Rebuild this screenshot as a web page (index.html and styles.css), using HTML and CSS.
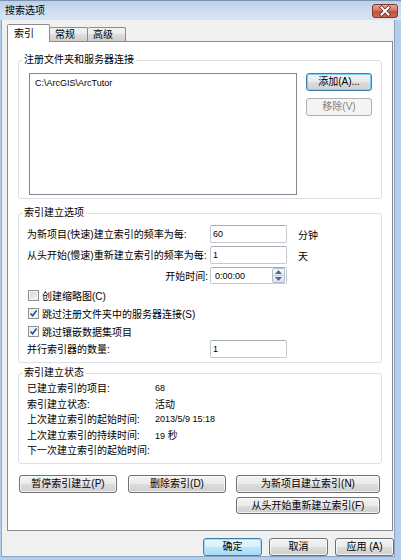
FILE: index.html
```html
<!DOCTYPE html>
<html lang="zh-CN">
<head>
<meta charset="utf-8">
<title>搜索选项</title>
<link rel="stylesheet" href="styles.css">
</head>
<body>
<div class="window">
  <div class="titlebar">
    <span class="title">搜索选项</span>
    <div class="close">
      <svg width="26" height="14" viewBox="0 0 26 14">
        <defs>
          <linearGradient id="cg" x1="0" y1="0" x2="0" y2="1">
            <stop offset="0" stop-color="#e9a99b"/>
            <stop offset="0.45" stop-color="#d47a66"/>
            <stop offset="0.5" stop-color="#c4503a"/>
            <stop offset="1" stop-color="#cf6a4f"/>
          </linearGradient>
        </defs>
        <rect x="0.5" y="0.5" width="25" height="13" rx="2.5" fill="url(#cg)" stroke="#7d3a2e"/>
        <path d="M9.5 3.5 L16.5 10.5 M16.5 3.5 L9.5 10.5" stroke="#6b2a20" stroke-width="3.6" stroke-linecap="square"/>
        <path d="M9.5 3.5 L16.5 10.5 M16.5 3.5 L9.5 10.5" stroke="#ffffff" stroke-width="2" stroke-linecap="square"/>
      </svg>
    </div>
  </div>
  <div class="client">
    <div class="tabs">
      <div class="tab active">索引</div>
      <div class="tab">常规</div>
      <div class="tab">高级</div>
    </div>
    <div class="page">
      <div class="group g1">
        <span class="legend">注册文件夹和服务器连接</span>
        <div class="listbox"><div class="item lat">C:\ArcGIS\ArcTutor</div></div>
        <div class="sidebtns">
          <div class="btn focus">添加(A)...</div>
          <div class="btn disabled">移除(V)</div>
        </div>
      </div>

      <div class="group g2">
        <span class="legend">索引建立选项</span>
        <div class="frow">
          <span class="flabel">为新项目(快速)建立索引的频率为每:</span>
          <div class="tbox lat">60</div>
          <span class="unit">分钟</span>
        </div>
        <div class="frow">
          <span class="flabel">从头开始(慢速)重新建立索引的频率为每:</span>
          <div class="tbox lat">1</div>
          <span class="unit">天</span>
        </div>
        <div class="frow spinrow">
          <span class="flabel right">开始时间:</span>
          <div class="tbox spin">
            <span class="lat spintext">0:00:00</span>
            <div class="spinner">
              <div class="sbtn"><svg width="7" height="4" viewBox="0 0 7 4"><path d="M0 4 L3.5 0 L7 4 Z" fill="#4a6a95"/></svg></div>
              <div class="sbtn"><svg width="7" height="4" viewBox="0 0 7 4"><path d="M0 0 L3.5 4 L7 0 Z" fill="#4a6a95"/></svg></div>
            </div>
          </div>
        </div>
        <div class="crow first">
          <span class="cbox"></span>
          <span>创建缩略图(C)</span>
        </div>
        <div class="crow">
          <span class="cbox checked"><svg width="9" height="9" viewBox="0 0 9 9"><path d="M1.5 4.5 L3.6 6.8 L7.6 1.6" fill="none" stroke="#2b4b83" stroke-width="1.6"/></svg></span>
          <span>跳过注册文件夹中的服务器连接(S)</span>
        </div>
        <div class="crow">
          <span class="cbox checked"><svg width="9" height="9" viewBox="0 0 9 9"><path d="M1.5 4.5 L3.6 6.8 L7.6 1.6" fill="none" stroke="#2b4b83" stroke-width="1.6"/></svg></span>
          <span>跳过镶嵌数据集项目</span>
        </div>
        <div class="frow">
          <span class="flabel">并行索引器的数量:</span>
          <div class="tbox lat">1</div>
        </div>
      </div>

      <div class="group g3">
        <span class="legend">索引建立状态</span>
        <div class="srow"><span class="slabel">已建立索引的项目:</span><span class="lat">68</span></div>
        <div class="srow"><span class="slabel">索引建立状态:</span><span>活动</span></div>
        <div class="srow"><span class="slabel">上次建立索引的起始时间:</span><span class="lat">2013/5/9 15:18</span></div>
        <div class="srow"><span class="slabel">上次建立索引的持续时间:</span><span><span class="lat">19</span> 秒</span></div>
        <div class="srow"><span class="slabel">下一次建立索引的起始时间:</span><span></span></div>
      </div>

      <div class="brow1">
        <div class="btn b1">暂停索引建立(P)</div>
        <div class="btn b2">删除索引(D)</div>
        <div class="btn b3">为新项目建立索引(N)</div>
      </div>
      <div class="brow2">
        <div class="btn b3">从头开始重新建立索引(F)</div>
      </div>
    </div>
    <div class="footer">
      <div class="btn default fb">确定</div>
      <div class="btn fb">取消</div>
      <div class="btn fb">应用 (A)</div>
    </div>
  </div>
</div>
</body>
</html>
```

FILE: styles.css
```css
* { box-sizing: border-box; }
html, body { margin: 0; padding: 0; }
body {
  width: 401px;
  height: 560px;
  overflow: hidden;
  background: #b4cdea;
  font-family: "Liberation Sans", "Noto Sans CJK SC", sans-serif;
  font-size: 10px;
  color: #000;
}
.lat { font-family: "Liberation Sans", "DejaVu Sans", sans-serif; font-size: 9px; }

.window {
  width: 401px;
  height: 560px;
  display: flex;
  flex-direction: column;
  border-top: 1px solid #7c93b0;
}
.titlebar {
  height: 19px;
  flex: none;
  display: flex;
  align-items: center;
  justify-content: space-between;
  padding: 0 3px 0 5px;
  background: linear-gradient(#bccfe7, #cfdff2 60%, #d6e4f4);
}
.title { font-size: 10px; line-height: 12px; margin-top: 1px; }
.close { width: 26px; height: 14px; display: flex; align-self: flex-start; margin-top: 3px; }

.client {
  flex: 1;
  margin: 0 6px 3px 1px;
  background: #f0f0f0;
  border-left: 1px solid #9aa6b6;
  border-right: 1px solid #8aa3c2;
  border-bottom: 1px solid #8aa3c2;
  padding: 4px 0 0 5px;
  display: flex;
  flex-direction: column;
}

/* tabs */
.tabs {
  height: 17px;
  display: flex;
  align-items: flex-end;
  flex: none;
}
.tab {
  height: 14px;
  width: 38px;
  border: 1px solid #898c95;
  border-bottom: none;
  border-left: none;
  background: linear-gradient(#f2f2f2, #ebebeb 50%, #dddddd 50%, #cfcfcf);
  padding-left: 5px;
  line-height: 13px;
  border-radius: 2px 2px 0 0;
}
.tab.active {
  height: 18px;
  width: 43px;
  margin-bottom: -1px;
  border-left: 1px solid #898c95;
  background: #ffffff;
  padding-left: 6px;
  line-height: 17px;
  position: relative;
  z-index: 1;
}

.page {
  width: 386px;
  height: 490px;
  flex: none;
  border: 1px solid #898c95;
  background: #ffffff;
  display: flex;
  flex-direction: column;
}

/* group boxes */
.group {
  position: relative;
  width: 364px;
  margin-left: 10px;
  border: 1px solid #dcdfe3;
  border-radius: 3px;
  flex: none;
}
.legend {
  position: absolute;
  left: 4px;
  top: -7px;
  background: #ffffff;
  padding: 0 2px 0 1px;
  line-height: 12px;
}
.g1 {
  margin-top: 18px;
  height: 139px;
  display: flex;
  padding: 12px 9px 0 10px;
}
.listbox {
  width: 268px;
  height: 122px;
  border: 1px solid #828790;
  background: #fff;
  padding: 3px 5px;
}
.item { line-height: 12px; }
.sidebtns {
  margin-left: 9px;
  display: flex;
  flex-direction: column;
  gap: 7px;
}
.sidebtns .btn { width: 66px; height: 18px; }

/* buttons */
.btn {
  display: flex;
  align-items: center;
  justify-content: center;
  border: 1px solid #707070;
  border-radius: 3px;
  background: linear-gradient(#f2f2f2, #ebebeb 50%, #dddddd 50%, #cfcfcf);
  box-shadow: inset 0 0 0 1px rgba(255,255,255,0.7);
  line-height: 12px;
  white-space: nowrap;
}
.btn.focus {
  border-color: #3c7fb1;
  background: linear-gradient(#eaf6fd, #d9f0fc 50%, #bee6fd 50%, #a7d9f5);
  background: linear-gradient(#f2f2f2, #ebebeb 50%, #dddddd 50%, #cfcfcf);
  box-shadow: inset 0 0 0 1px #7ad2f8;
}
.btn.disabled {
  border-color: #adb2b5;
  background: #f4f4f4;
  color: #838383;
  box-shadow: none;
}
.btn.default {
  border-color: #3c7fb1;
  background: linear-gradient(#eaf6fd, #d9f0fc 50%, #bee6fd 50%, #a7d9f5);
  box-shadow: inset 0 0 0 1px #a6dcf7;
}

/* group 2 form */
.g2 {
  margin-top: 14px;
  height: 150px;
  padding: 11px 0 0 8px;
}
.frow {
  display: flex;
  align-items: center;
  height: 18px;
  margin-bottom: 3px;
}
.frow.spinrow { height: 17px; margin-bottom: 2px; }
.flabel {
  width: 183px;
  flex: none;
  white-space: nowrap;
  line-height: 12px;
  padding-top: 2px;
}
.flabel.right { text-align: right; padding-right: 2px; }
.tbox {
  width: 77px;
  height: 18px;
  flex: none;
  border: 1px solid #c5c8cf;
  border-top-color: #abadb3;
  border-radius: 2px;
  background: #fff;
  padding: 0 2px;
  display: flex;
  align-items: center;
}
.unit { margin-left: 11px; padding-top: 1px; }
.tbox.spin { height: 17px; padding: 0 1px 0 4px; justify-content: space-between; }
.spintext { line-height: 12px; }
.spinner {
  width: 13px;
  height: 15px;
  display: flex;
  flex-direction: column;
  border: 1px solid #b3bcc8;
  border-radius: 2px;
  background: linear-gradient(#f5f7fa, #dfe5ec);
}
.sbtn { flex: 1; display: flex; align-items: center; justify-content: center; }
.sbtn + .sbtn { border-top: 1px solid #c4ccd6; }

.crow {
  display: flex;
  align-items: center;
  height: 18px;
  padding-left: 1px;
}
.crow.first { margin-top: 0; }
.cbox {
  width: 11px;
  height: 11px;
  border: 1px solid #8e8f8f;
  background: linear-gradient(135deg, #d7d7d7, #f4f4f4);
  box-shadow: inset 0 0 0 1px #f4f4f4;
  margin-right: 3px;
  display: flex;
  align-items: center;
  justify-content: center;
  flex: none;
}
.cbox.checked { background: linear-gradient(135deg, #e4eaf3, #fbfcfd); }
.crow + .frow { margin-top: 0; }

/* group 3 status */
.g3 {
  margin-top: 10px;
  height: 91px;
  padding: 6px 0 0 8px;
}
.srow {
  display: flex;
  align-items: center;
  height: 15.5px;
  white-space: nowrap;
}
.slabel { width: 128px; flex: none; }

/* bottom buttons */
.brow1 {
  display: flex;
  margin: 11px 0 0 11px;
  height: 18px;
}
.brow1 .b1 { width: 98px; margin-right: 11px; }
.brow1 .b2 { width: 98px; margin-right: 10px; }
.b3 { width: 144px; }
.brow2 {
  display: flex;
  margin: 4px 0 0 228px;
  height: 17px;
}

.footer {
  display: flex;
  justify-content: flex-end;
  gap: 7px;
  margin-top: 7px;
  height: 18px;
  padding-right: 0;
}
.fb { width: 59px; height: 18px; }
```
